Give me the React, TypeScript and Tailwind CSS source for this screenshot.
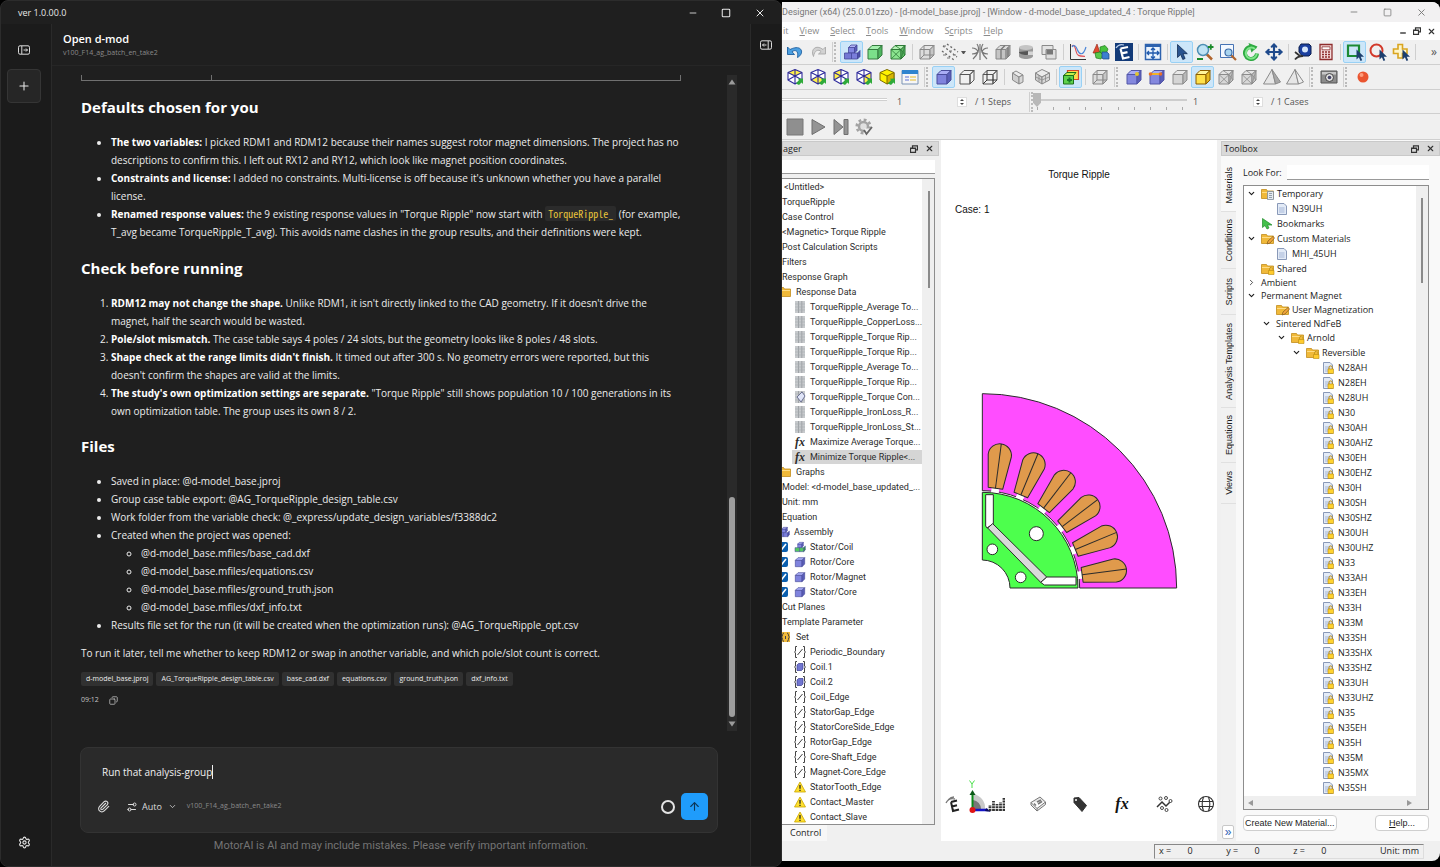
import React from "react";
import {
  ArrowUp,
  ChevronDown,
  Copy,
  Minus,
  Move,
  Paperclip,
  Plus,
  Settings,
  Settings2,
  Square,
  X,
} from "lucide-react";

type Kids = { children?: React.ReactNode };

/* ---------- shared icon drawings ---------- */

function Svg({ children, size = "size-[18px]" }: Kids & { size?: string }) {
  return (
    <svg viewBox="0 0 18 18" className={`${size} shrink-0`} fill="none" aria-hidden="true">
      {children}
    </svg>
  );
}

function CubeShape({ front, top, side, stroke }: { front: string; top: string; side: string; stroke: string }) {
  return (
    <g stroke={stroke} strokeWidth="1" strokeLinejoin="round">
      <path d="M2 6.5h10V16H2z" fill={front} />
      <path d="M2 6.5 6 2.5h10l-4 4z" fill={top} />
      <path d="M12 6.5l4-4V12l-4 4z" fill={side} />
    </g>
  );
}

const BlueCube = ({ size }: { size?: string }) => (
  <Svg size={size}>
    <CubeShape front="#7f83dd" top="#a9adf5" side="#5a5eb8" stroke="#4a4d9c" />
  </Svg>
);
const GreenCube = () => (
  <Svg>
    <CubeShape front="#7be08a" top="#a5f0ae" side="#4fb55f" stroke="#347a3f" />
  </Svg>
);
const YellowCube = () => (
  <Svg>
    <CubeShape front="#ffe14a" top="#fff59a" side="#e5b81e" stroke="#8a5c00" />
  </Svg>
);
const GreyCube = () => (
  <Svg>
    <CubeShape front="#d5d5d5" top="#e8e8e8" side="#b9b9b9" stroke="#8c8c8c" />
  </Svg>
);
const MeshCube = ({ green }: { green?: boolean }) => (
  <Svg>
    <CubeShape
      front={green ? "#8be58f" : "#d8d8d8"}
      top={green ? "#b5f2b5" : "#e4e4e4"}
      side={green ? "#5cbb64" : "#c2c2c2"}
      stroke={green ? "#2f7a38" : "#8c8c8c"}
    />
    <path d="M2 6.5 12 16M12 6.5 2 16M6 2.5l6 4M12 6.5l4 5.5M16 2.5 12 16" stroke={green ? "#2f7a38" : "#8c8c8c"} strokeWidth=".8" />
  </Svg>
);
const WireCube = ({ full, grey }: { full?: boolean; grey?: boolean }) => (
  <Svg>
    <CubeShape front={grey ? "#dcdcdc" : "none"} top={grey ? "#e6e6e6" : "none"} side={grey ? "#c6c6c6" : "none"} stroke={grey ? "#888" : "#555"} />
    {(full || grey) && <path d="M6 2.5V12M6 12h10M6 12l-4 4" stroke={grey ? "#888" : "#333"} />}
  </Svg>
);
const GridCube = () => (
  <Svg>
    <CubeShape front="#c4c4c4" top="#dcdcdc" side="#a6a6a6" stroke="#888" />
    <path d="M7 6.5V16M7 6.5l4-4M14 4.5V14" stroke="#777" strokeWidth="1.3" />
  </Svg>
);
const SlimCube = ({ box }: { box?: boolean }) => (
  <Svg>
    <g stroke="#8a8a8a" strokeLinejoin="round">
      <path d="M2.500 5 9 9v7L2.500 12z" fill="#cfcfcf" />
      <path d={box ? "M2.500 5 9 1.500 16.500 5 9 9z" : "M2.500 5 6 3l7 4-4 2z"} fill="#ebebeb" />
      <path d={box ? "M9 9l7.500-4V12L9 16z" : "M9 9l4-2v7l-4 2z"} fill="#d8d8d8" />
      {box && <path d="M6 7.2v6.5M12.500 7.2v6.5M2.500 8.800 9 12l7.500-3.200" strokeWidth=".8" />}
    </g>
  </Svg>
);

const facePaths = {
  top: "M9 1.5 16 4.5 9 8 2 4.5z",
  bottom: "M2 12l7-3.5 7 3.5-7 4z",
  left: "M2 4.5 9 1.5V9l-7 3z",
  right: "M9 8l7-3.5V12l-7 4z",
};
const ViewCube = ({ face }: { face: keyof typeof facePaths | "all" }) => (
  <Svg>
    {face === "all" ? (
      <g stroke="#7a6a00" strokeLinejoin="round">
        <path d="M9 1.5 16 4.5V12l-7 4-7-4V4.5z" fill="#fff200" />
        <path d="M9 8l7-3.5V12l-7 4z" fill="#d7b400" />
        <path d="M2 4.5 9 8" />
      </g>
    ) : (
      <g strokeLinejoin="round">
        <path d="M9 1.5 16 4.5V12l-7 4-7-4V4.5z" fill="#fff" />
        <path d={facePaths[face]} fill="#fff04a" />
        <path d="M9 1.5 16 4.5V12l-7 4-7-4V4.5zM2 4.5 9 8l7-3.5M9 8v8M9 1.5V8M2 12l7-4 7 4" stroke="#2e2a9c" strokeWidth="1.1" />
      </g>
    )}
    <path d="M10 15.5 13 12l-1.200-1.300L17 10.500V16l-1.500-1.500-2.500 2.500z" fill="#2faa3a" />
  </Svg>
);

const Undo = ({ grey }: { grey?: boolean }) => (
  <Svg>
    <path
      d={
        grey
          ? "M16.500 4v7h-7l2.600-2.500C9.500 6 5.500 7 4.500 13.500 1 6.500 7 1 14 6.500z"
          : "M1.500 4v7.500h7L6 8.800C8.500 6.500 13 7 11.500 14.500 19 10.500 16 .5 4 6.500z"
      }
      fill={grey ? "#d2d2d2" : "#4b9fe0"}
      stroke={grey ? "#a8a8a8" : "#1c5f9f"}
      strokeWidth=".9"
      strokeLinejoin="round"
    />
  </Svg>
);

const Blocks = ({ size, green }: { size?: string; green?: boolean }) => (
  <Svg size={size}>
    <g stroke="#45489a" strokeWidth=".8" strokeLinejoin="round">
      <path d="M5.500 4.500h6V10h-6z" fill="#8286e0" />
      <path d="M5.500 4.500 8 2h6l-2.500 2.500z" fill="#b1b4f5" />
      <path d="M11.500 4.500 14 2v5.500L11.500 10z" fill="#5a5eb8" />
      <path d="M1.500 10h7v6h-7z" fill={green ? "#54c95f" : "#7478d4"} />
      <path d="M8.500 10h6v6h-6z" fill={green ? "#54c95f" : "#7a7edb"} />
      <path d="M14.500 10 17 7.500v6L14.500 16z" fill={green ? "#2f9a3c" : "#4d50a8"} />
    </g>
  </Svg>
);

const Dashes = () => (
  <Svg>
    <path d="M2 3l14 11M1 8l12 9M6 1l11 8" stroke="#666" strokeWidth="1.300" strokeDasharray="2 2.200" />
    <path d="M2 3h3M8 8h3M12 12h3M2 12h3M6 15h3" stroke="#777" />
  </Svg>
);
const Burst = () => (
  <Svg>
    <path d="M6 1c2 3 2 5 1 8s-3 5-5 7M12 1c-2 3-2 5-1 8s3 5 5 7M1 5c3 0 5 1 6 4-2 2-4 2-6 2M17 5c-3 0-5 1-6 4 2 2 4 2 6 2M9 1v16" stroke="#777" strokeWidth="1.200" />
  </Svg>
);
const Cylinder = () => (
  <Svg>
    <path d="M2 4.500V13c0 4 14 4 14 0V4.500z" fill="#999" />
    <ellipse cx="9" cy="4.500" rx="7" ry="2.500" fill="#c4c4c4" />
    <path d="M2 9c0 3 9 3.500 9 2.500V8" fill="#555" />
    <path d="M11 8.500h5V12h-5z" fill="#d5d5d5" />
  </Svg>
);
const Overlap = () => (
  <Svg>
    <path d="M2 2.500h11v9H2z" fill="#e3e3e3" stroke="#8a8a8a" />
    <path d="M6 6.500h10V16H6z" fill="#dedede" stroke="#8a8a8a" />
    <path d="M6.500 7h6.500v4.500H6.500z" fill="#777" />
  </Svg>
);
const GraphIcon = () => (
  <Svg>
    <path d="M1.500 1v15.500H17" stroke="#333" />
    <path d="M3 3c1.500-2 3 0 4 5s3 5 9 5.500" stroke="#e0555c" strokeWidth="1.200" />
    <path d="M3 4c2-3 4-1 5.500 3S14 14 17 4" stroke="#4b86d8" strokeWidth="1.200" />
  </Svg>
);
const Shapes = () => (
  <Svg>
    <path d="M5 1 1 10h7z" fill="#e04a2f" stroke="#8f1f12" strokeWidth=".6" />
    <path d="M8 4l5-1.500L16 6l-2 5H8z" fill="#46c23c" stroke="#1f7a1a" strokeWidth=".7" />
    <path d="M3 10l5-1 3 3-2 4-5-1z" fill="#57c84a" stroke="#1f7a1a" strokeWidth=".7" />
    <path d="M10 9h5l2 2v5h-6l-1-1z" fill="#3c7fd0" stroke="#1a4788" strokeWidth=".7" />
  </Svg>
);
const ExpressE = () => (
  <Svg>
    <path d="M0 0h18v18H0z" fill="#123a78" />
    <path d="M1 5c2-3 5-4 8-3" stroke="#b7cbe8" strokeWidth="1.200" />
    <path d="M5.500 5.500 13 4M5.500 5.500 8 15.500l6.500-1.500M6.800 10.300l5.700-1.200" stroke="#fff" strokeWidth="2.200" />
  </Svg>
);
const FitWindow = () => (
  <Svg>
    <path d="M1.500 1.500h15v15h-15z" fill="#eaf3fd" stroke="#2d62ae" strokeWidth="1.500" />
    <path d="M1.500 3h15" stroke="#2d62ae" strokeWidth="2" />
    <path d="M9 5v10.500M3 10h12M7 7l2-2 2 2M7 13.500l2 2 2-2M5 8l-2 2 2 2M13 8l2 2-2 2" stroke="#1f59ac" strokeWidth="1.300" />
  </Svg>
);
const CursorPath = ({ at }: { at: string }) => (
  <path transform={at} d="M0 0v10l2.400-2.200L4 11.500l1.700-.8L4.200 7.200h3.300z" fill="#1d3f6e" />
);
const Pointer = () => (
  <Svg>
    <path d="M4.500 1.500v13l3.200-2.900 2.100 4.900 2.300-1-2.100-4.800h4.300z" fill="#2a5590" stroke="#122c52" strokeWidth=".8" />
  </Svg>
);
const ZoomPlus = () => (
  <Svg>
    <path d="M10 10.500l6 6" stroke="#b0642c" strokeWidth="2.500" />
    <circle cx="7" cy="7" r="5.500" fill="#bfe3f5" stroke="#4f8fb4" strokeWidth="1.500" />
    <path d="M12 4h5.500M14.800 1.300v5.500M1 16h6" stroke="#1a8a2a" strokeWidth="1.800" />
  </Svg>
);
const ZoomRect = () => (
  <Svg>
    <path d="M1.500 1.500h13v13h-13z" fill="#f3f8ff" stroke="#4673b4" />
    <path d="M12 12l5 5" stroke="#b0642c" strokeWidth="2.200" />
    <circle cx="9.500" cy="9.500" r="3.500" fill="#a9d4ef" stroke="#3b6ca8" strokeWidth="1.200" />
  </Svg>
);
const Refresh = () => (
  <Svg>
    <path d="M13.500 6A6 6 0 1 0 15 10.500" stroke="#2faa42" strokeWidth="4" />
    <path d="M6.500 0l9 3.500-6 6z" fill="#2faa42" />
    <path d="M13 6A5.500 5.500 0 1 0 14.800 10.500" stroke="#7fe58a" strokeWidth="2" />
  </Svg>
);
const Tape = () => (
  <Svg>
    <path d="M7 1h8l2 2v8l-2 2H8L5 9V4z" fill="#1b3f9f" stroke="#0c1f4c" />
    <circle cx="11" cy="6.500" r="3" fill="#d5e5fa" />
    <path d="M9 13c-4 0-6 1-8 3.500M1 9l5 4" stroke="#333" strokeWidth="1.800" />
  </Svg>
);
const Calc = () => (
  <Svg>
    <path d="M3 1.500h12v15H3z" fill="#f4dcdc" stroke="#8e2d2d" strokeWidth="1.300" />
    <path d="M5 3.800h8v3H5z" fill="#fff" stroke="#8e2d2d" strokeWidth=".8" />
    <path d="M5 9h2M8 9h2M11 9h2M5 11.500h2M8 11.500h2M11 11.500h2M5 14h2M8 14h2M11 14h2" stroke="#8e2d2d" strokeWidth="1.500" />
  </Svg>
);
const PickRect = () => (
  <Svg>
    <path d="M2 2.500h11V13H2z" stroke="#1c8a35" strokeWidth="2.200" />
    <CursorPath at="translate(10.500 6.500)" />
  </Svg>
);
const PickCircle = () => (
  <Svg>
    <circle cx="7.500" cy="7.500" r="6" stroke="#d23a2b" strokeWidth="2" />
    <CursorPath at="translate(10.500 6.500)" />
  </Svg>
);
const PickCross = () => (
  <Svg>
    <path d="M6 1.500h4.500V6H15v4.500h-4.500V15H6v-4.500H1.500V6H6z" fill="#fff6c9" stroke="#d9a520" strokeWidth="1.600" />
    <CursorPath at="translate(10.500 6.500)" />
  </Svg>
);
const TableWindow = () => (
  <Svg>
    <path d="M1 2.500h16v13.500H1z" fill="#f6f6f6" stroke="#7a93b4" />
    <path d="M1 2h16v4H1z" fill="#2f84cf" />
    <path d="M4 9h4M4 12h4" stroke="#aab3e6" strokeWidth="2" />
    <path d="M9 9h6M9 12h6" stroke="#eed98f" strokeWidth="2" />
  </Svg>
);
const GreenYellow = () => (
  <Svg>
    <path d="M5.500 2.500h11v9h-11z" fill="#ffd84a" stroke="#d2442a" strokeWidth="1.200" />
    <path d="M1.500 7.500h10V16h-10z" fill="#5ed14c" stroke="#1c6f1a" />
    <path d="M1.500 7.500 5 4.500h9l-2.500 3z" fill="#c5ef4a" stroke="#1c6f1a" />
    <path d="M5 12h5M7.500 9.500v5" stroke="#167a25" strokeWidth="2" />
  </Svg>
);
const CubeWithMark = ({ edge }: { edge?: boolean }) => (
  <Svg>
    <CubeShape front="#8488de" top="#a9adf5" side="#5a5eb8" stroke="#5357a8" />
    {edge ? (
      <g>
        <path d="M2 6h11" stroke="#f0b429" strokeWidth="2" />
        <circle cx="2.500" cy="6" r="1.800" fill="#e8702a" />
        <circle cx="12.500" cy="6" r="1.800" fill="#e8702a" />
      </g>
    ) : (
      <circle cx="12" cy="6" r="2" fill="#e2c52e" />
    )}
  </Svg>
);
const Tetra = ({ shade }: { shade?: boolean }) => (
  <Svg>
    <path d="M9 1.500 .5 16h12z" fill="#e6e6e6" stroke="#8a8a8a" />
    <path d="M9 1.500 17.500 14 12.500 16z" fill={shade ? "#a8a8a8" : "#efefef"} stroke="#8a8a8a" />
  </Svg>
);
const Camera = () => (
  <Svg>
    <path d="M1 3h16v12H1z" fill="#8c8c8c" stroke="#555" />
    <path d="M2 4h14v2.500H2z" fill="#c8c8c8" />
    <circle cx="9.500" cy="9.500" r="4" fill="#ddd" stroke="#444" />
    <circle cx="9.500" cy="9.500" r="1.800" fill="#446" />
  </Svg>
);
const RedBall = () => (
  <Svg>
    <circle cx="9" cy="9" r="5.500" fill="#ea5530" />
    <circle cx="7.500" cy="7" r="2" fill="#ff9d7c" />
  </Svg>
);
const GearCheck = () => (
  <Svg>
    <circle cx="8.500" cy="8.500" r="6.800" stroke="#a3a3a3" strokeWidth="2.500" strokeDasharray="2.800 2.540" />
    <circle cx="8.500" cy="8.500" r="4.500" fill="#e0e0e0" stroke="#a3a3a3" strokeWidth="2.500" />
    <path d="M9 10.500h7V17H9z" fill="#f0f0f0" />
    <path d="M9 12l2.500 4L17 9" stroke="#666" strokeWidth="1.800" />
  </Svg>
);

/* ---------- tree icons ---------- */

const FolderIcon = ({ mark }: { mark?: "page" | "pen" | "lock" }) => (
  <svg viewBox="0 0 14 12" className="h-3 w-3.5 shrink-0" aria-hidden="true">
    <path d="M.5 1.500h5l1 1.500h6v7.500H.5z" fill="#f0b93a" stroke="#c28d1c" strokeWidth=".8" />
    <path d="M1 4h11v1H1z" fill="#ffdd85" />
    {mark === "page" && <path d="M6.500 3.500h6v8h-6zM8 5.500h3M8 7.500h3M8 9.500h3" fill="#e6ebf0" stroke="#7f8c99" strokeWidth=".8" />}
    {mark === "pen" && <path d="M6 11l1-3 5-4.500 1.500 1.500L9 10z" fill="#f4a53c" stroke="#7d5a20" strokeWidth=".7" />}
    {mark === "lock" && (
      <g>
        <path d="M8.500 7.500V6a1.500 1.500 0 0 1 3.500 0v1.500" fill="none" stroke="#c79a1c" />
        <path d="M7.500 7.500h5.500v4H7.500z" fill="#ffcb2e" stroke="#b98a10" strokeWidth=".6" />
      </g>
    )}
  </svg>
);
const DocIcon = ({ lock }: { lock?: boolean }) => (
  <svg viewBox="0 0 12 12" className="size-3 shrink-0" aria-hidden="true">
    <path d="M1.500.5h6.500L10.500 3v8.500h-9z" fill="#e3ebf7" stroke="#7d8fb0" strokeWidth=".9" />
    <path d="M3 5h5.500M3 7h5.500M3 9h5.500" stroke="#9fb1d2" strokeWidth=".9" />
    {lock && (
      <g>
        <path d="M7 7V5.500a1.500 1.500 0 0 1 3.200 0V7" fill="none" stroke="#b98a10" />
        <path d="M6 7h5.500v4.500H6z" fill="#ffd22e" stroke="#b98a10" strokeWidth=".6" />
      </g>
    )}
  </svg>
);
const Bookmark = () => (
  <svg viewBox="0 0 12 12" className="size-3 shrink-0" aria-hidden="true">
    <path d="M1.500.5v9l2.500-2 2 3.500 2-1-1.500-3H11z" fill="#43c04a" stroke="#1f8a2a" strokeWidth=".7" />
  </svg>
);
const DataIcon = ({ contour }: { contour?: boolean }) => (
  <svg viewBox="0 0 12 12" className="size-3 shrink-0" aria-hidden="true">
    <path d="M1 0h10v12H1z" fill="#c6c9cc" />
    <path d="M4.500 0v12M7.800 0v12" stroke="#8f9498" strokeWidth=".7" />
    <path d="M1 3h10M1 6h10M1 9h10" stroke="#a6abaf" strokeWidth=".6" />
    {contour && <path d="M3 6l5-5 3 4-4 6z" fill="#dfe4f7" stroke="#555a80" strokeWidth=".8" />}
  </svg>
);
const Fx = () => <span className="w-3 shrink-0 text-center font-['Liberation_Serif',serif] text-[12px] leading-3 font-bold italic">fx</span>;
const SetIcon = ({ cube }: { cube?: boolean }) => (
  <svg viewBox="0 0 12 12" className="size-3 shrink-0" fill="none" aria-hidden="true">
    <path d="M3 .5H1.500V5L.5 6l1 1v4.500H3M9 .5h1.500V5l1 1-1 1v4.500H9" stroke="#444" />
    {cube ? <path d="M3 4l1.500-1.500H9V8L7.500 9.500H3z" fill="#7176d0" stroke="#3c4094" strokeWidth=".7" /> : <path d="M3.500 9 8.500 3" stroke="#444" />}
  </svg>
);
const Warn = () => (
  <svg viewBox="0 0 12 12" className="size-3 shrink-0" aria-hidden="true">
    <path d="M6 1 11.500 11H.5z" fill="#ffe02e" stroke="#c9a400" strokeWidth=".8" strokeLinejoin="round" />
    <path d="M6 4v3.800M6 8.800V10" stroke="#222" strokeWidth="1.300" />
  </svg>
);

/* ---------- chat window ---------- */

const PanelIcon = ({ flip }: { flip?: boolean }) => (
  <svg viewBox="0 0 12 10" className={flip ? "h-2.5 w-3 -scale-x-100" : "h-2.5 w-3"} fill="none" stroke="#dcdcdc" aria-hidden="true">
    <rect x=".5" y=".8" width="11" height="8.400" rx="1.500" />
    <path d="M3.800 1v8M5.500 5h4M8 3.500 9.500 5 8 6.500" />
  </svg>
);

const H = ({ children }: Kids) => <h2 className="text-[15px] leading-5 font-bold text-white">{children}</h2>;
const B = ({ children }: Kids) => <strong className="font-bold text-white">{children}</strong>;

const chips = ["d-model_base.jproj", "AG_TorqueRipple_design_table.csv", "base_cad.dxf", "equations.csv", "ground_truth.json", "dxf_info.txt"];

function ChatWindow() {
  return (
    <section className="flex min-w-0 flex-col overflow-hidden rounded-lg border border-[#2c2c2c] bg-[#1f1f1f] font-['Open_Sans','Noto_Sans',sans-serif] text-[#e8e8e8]">
      <header className="flex h-[23px] shrink-0 items-center justify-between pr-[15px] pl-[17px]">
        <span className="text-[9px]">ver 1.0.00.0</span>
        <div className="flex items-center gap-[23px]">
          <button aria-label="Minimize"><Minus size={10} /></button>
          <button aria-label="Maximize"><Square size={10} strokeWidth={2.500} /></button>
          <button aria-label="Close"><X size={12} /></button>
        </div>
      </header>
      <div className="flex min-h-0 flex-1">
        <nav className="flex w-[51px] shrink-0 flex-col items-center border-r border-[#2a2a2a] bg-[#1b1b1b] pr-1 pb-[17px]">
          <button aria-label="Open sidebar" className="mt-5 flex h-3 items-center"><PanelIcon /></button>
          <button aria-label="New chat" className="mt-[13px] flex size-[34px] items-center justify-center rounded border border-[#353535] bg-[#262626]">
            <Plus size={14} strokeWidth={1.800} />
          </button>
          <button aria-label="Settings" className="mt-auto"><Settings size={13} /></button>
        </nav>
        <main className="flex min-w-0 flex-1 flex-col">
          <div className="flex h-[42px] shrink-0 flex-col justify-center border-b border-[#262626] pl-[11px]">
            <h1 className="text-[11px] leading-4 font-semibold text-white">Open d-mod</h1>
            <p className="text-[7px] leading-3 text-[#8a8a8a]">v100_F14_ag_batch_en_take2</p>
          </div>
          <div className="flex min-h-0 flex-1 pt-[9px] pr-[13px] pl-[29px]">
            <article className="min-w-0 flex-1 pr-[46px] text-[10px] leading-[18px] text-[#ececec]">
              <div className="flex h-1.5 border-x border-b border-[#707070]">
                <div className="w-[130px] border-r border-[#707070]" />
              </div>
              <div className="mt-4"><H>Defaults chosen for you</H></div>
              <ul className="mt-4 -mr-2 list-disc pl-[30px]">
                <li><B>The two variables:</B> I picked RDM1 and RDM12 because their names suggest rotor magnet dimensions. The project has no descriptions to confirm this. I left out RX12 and RY12, which look like magnet position coordinates.</li>
                <li><B>Constraints and license:</B> I added no constraints. Multi-license is off because it's unknown whether you have a parallel license.</li>
                <li><B>Renamed response values:</B> the 9 existing response values in "Torque Ripple" now start with <code className="rounded-xs bg-[#2b2b2b] px-[3px] font-['Noto_Sans_Mono_CJK_JP','Liberation_Mono',monospace] text-[10px] leading-3 text-[#e8c43a]">TorqueRipple_</code> (for example, T_avg became TorqueRipple_T_avg). This avoids name clashes in the group results, and their definitions were kept.</li>
              </ul>
              <div className="mt-[17px]"><H>Check before running</H></div>
              <ol className="mt-4 list-decimal pl-[30px]">
                <li><B>RDM12 may not change the shape.</B> Unlike RDM1, it isn't directly linked to the CAD geometry. If it doesn't drive the magnet, half the search would be wasted.</li>
                <li><B>Pole/slot mismatch.</B> The case table says 4 poles / 24 slots, but the geometry looks like 8 poles / 48 slots.</li>
                <li><B>Shape check at the range limits didn't finish.</B> It timed out after 300 s. No geometry errors were reported, but this doesn't confirm the shapes are valid at the limits.</li>
                <li><B>The study's own optimization settings are separate.</B> "Torque Ripple" still shows population 10 / 100 generations in its own optimization table. The group uses its own 8 / 2.</li>
              </ol>
              <div className="mt-4"><H>Files</H></div>
              <ul className="mt-4 list-disc pl-[30px]">
                <li>Saved in place: @d-model_base.jproj</li>
                <li>Group case table export: @AG_TorqueRipple_design_table.csv</li>
                <li>Work folder from the variable check: @_express/update_design_variables/f3388dc2</li>
                <li>Created when the project was opened:
                  <ul className="list-[circle] pl-[30px]">
                    <li>@d-model_base.mfiles/base_cad.dxf</li>
                    <li>@d-model_base.mfiles/equations.csv</li>
                    <li>@d-model_base.mfiles/ground_truth.json</li>
                    <li>@d-model_base.mfiles/dxf_info.txt</li>
                  </ul>
                </li>
                <li>Results file set for the run (it will be created when the optimization runs): @AG_TorqueRipple_opt.csv</li>
              </ul>
              <p className="mt-2.5">To run it later, tell me whether to keep RDM12 or swap in another variable, and which pole/slot count is correct.</p>
              <div className="mt-2.5 flex gap-[3px]">
                {chips.map((c) => (
                  <a key={c} href="#" className="rounded-xs bg-[#313131] px-[5px] text-[7px] leading-[14px] whitespace-nowrap">{c}</a>
                ))}
              </div>
              <div className="mt-2 flex items-center gap-2.5 text-[7px] leading-3 text-[#c5c5c5]">
                <time>09:12</time>
                <button aria-label="Copy"><Copy size={9} className="-scale-x-100" /></button>
              </div>
            </article>
            <div className="flex w-2.5 flex-col items-center bg-[#2a2a2a] py-1" aria-hidden="true">
              <svg viewBox="0 0 8 6" className="h-1.5 w-2 shrink-0"><path d="M4 .5 7.500 5.500h-7z" fill="#9b9b9b" /></svg>
              <div className="mt-auto mb-1 h-[34%] w-1.5 rounded-full bg-[#9d9d9d]" />
              <svg viewBox="0 0 8 6" className="h-1.5 w-2 shrink-0"><path d="M4 5.500 7.500.5h-7z" fill="#9b9b9b" /></svg>
            </div>
          </div>
          <form className="mt-4 mr-8 ml-7 flex h-[86px] shrink-0 flex-col rounded-lg border border-[#333] bg-[#2a2a2a] pr-[9px] pl-4">
            <div className="mt-[15px] flex h-[18px] items-center pl-[5px]">
              <input aria-label="Message" defaultValue="Run that analysis-group" className="[field-sizing:content] bg-transparent text-[10px] text-[#f0f0f0] caret-transparent outline-none" />
              <span className="h-3.5 w-px bg-[#f0f0f0]" />
            </div>
            <div className="mt-3 flex items-center text-[#dcdcdc]">
              <button type="button" aria-label="Attach"><Paperclip size={13} /></button>
              <button type="button" className="ml-4 flex items-center gap-1 text-[9px]">
                <Settings2 size={12} className="-scale-x-100" />Auto<ChevronDown size={9} className="ml-0.5" />
              </button>
              <span className="ml-2.5 text-[7px] text-[#8a8a8a]">v100_F14_ag_batch_en_take2</span>
              <span className="mr-1.5 ml-auto size-3.5 rounded-full border-2 border-[#e4e4e4]" />
              <button type="button" aria-label="Send" className="flex size-[27px] items-center justify-center rounded-[5px] bg-[#1f9cfb] text-[#0c3558]"><ArrowUp size={13} /></button>
            </div>
          </form>
          <p className="mt-[5px] mb-3 text-center font-['Roboto',sans-serif] text-[11px] leading-4 text-[#747474]">MotorAI is AI and may include mistakes. Please verify important information.</p>
        </main>
        <aside className="w-[31px] shrink-0 border-l border-[#2a2a2a] bg-[#1b1b1b] pt-4 pl-[9px]">
          <button aria-label="Open panel" className="block"><PanelIcon flip /></button>
        </aside>
      </div>
    </section>
  );
}

/* ---------- designer window ---------- */

type Tool = { name: string; icon: React.ReactNode; on?: boolean } | "sep" | "grip" | "caret";

function ToolRow({ tools }: { tools: Tool[] }) {
  return (
    <div className="flex h-[25px] shrink-0 items-center overflow-hidden border-b border-[#cfcfcf] pl-px">
      {tools.map((t, i) => {
        if (t === "sep") return <span key={i} className="mx-[2px] h-4 w-0.5 shrink-0 border-r border-[#cfcfcf]" />;
        if (t === "grip") return <span key={i} className="mr-1 ml-[3px] h-5 w-1 shrink-0 border-r-2 border-l border-r-[#bbb] border-l-[#cfcfcf] [border-right-style:dotted]" />;
        if (t === "caret") return <span key={i} className="mr-0.5 w-[5px] shrink-0 border-x-2 border-t-3 border-x-transparent border-t-[#555]" />;
        return (
          <button key={i} aria-label={t.name} className={t.on ? "flex h-[22px] w-[23px] shrink-0 items-center justify-center rounded-xs border border-[#99d1f5] bg-[#cce6f9]" : "flex h-[22px] w-[23px] shrink-0 items-center justify-center"}>
            {t.icon}
          </button>
        );
      })}
    </div>
  );
}

const row1: Tool[] = [
  { name: "Undo", icon: <Undo /> },
  { name: "Redo", icon: <Undo grey /> },
  "grip",
  { name: "Assembly", icon: <Blocks />, on: true },
  { name: "Solid", icon: <GreenCube /> },
  { name: "Mesh", icon: <MeshCube green /> },
  "sep",
  { name: "Transparent", icon: <WireCube grey /> },
  { name: "Vectors", icon: <Dashes /> },
  "caret",
  { name: "Flux lines", icon: <Burst /> },
  { name: "Sections", icon: <GridCube /> },
  { name: "Cylinder", icon: <Cylinder /> },
  { name: "Overlay", icon: <Overlap /> },
  "sep",
  { name: "Graph", icon: <GraphIcon /> },
  { name: "Geometry", icon: <Shapes /> },
  { name: "Express", icon: <ExpressE /> },
  "sep",
  { name: "Fit window", icon: <FitWindow /> },
  "sep",
  { name: "Pointer", icon: <Pointer />, on: true },
  { name: "Zoom", icon: <ZoomPlus /> },
  { name: "Zoom area", icon: <ZoomRect /> },
  { name: "Rotate", icon: <Refresh /> },
  { name: "Pan", icon: <Move size={18} color="#1f4a8c" strokeWidth={2.800} /> },
  "sep",
  { name: "Measure", icon: <Tape /> },
  { name: "Calculator", icon: <Calc /> },
  "sep",
  { name: "Pick rectangle", icon: <PickRect />, on: true },
  { name: "Pick circle", icon: <PickCircle /> },
  { name: "Pick polygon", icon: <PickCross /> },
  "sep",
];

const row2: Tool[] = [
  { name: "Top view", icon: <ViewCube face="top" /> },
  { name: "Bottom view", icon: <ViewCube face="bottom" /> },
  { name: "Left view", icon: <ViewCube face="left" /> },
  { name: "Right view", icon: <ViewCube face="right" /> },
  { name: "Isometric view", icon: <ViewCube face="all" /> },
  { name: "View list", icon: <TableWindow /> },
  "grip",
  { name: "Shaded", icon: <BlueCube />, on: true },
  { name: "Hidden line", icon: <WireCube /> },
  { name: "Wireframe", icon: <WireCube full /> },
  "sep",
  { name: "Slice", icon: <SlimCube /> },
  { name: "Split", icon: <SlimCube box /> },
  "sep",
  { name: "Parts", icon: <GreenYellow />, on: true },
  "sep",
  { name: "Ghost", icon: <WireCube grey /> },
  "grip",
  { name: "Vertex", icon: <CubeWithMark /> },
  { name: "Edge", icon: <CubeWithMark edge /> },
  { name: "Face", icon: <GreyCube /> },
  { name: "Part", icon: <YellowCube />, on: true },
  { name: "Element", icon: <MeshCube /> },
  { name: "Node", icon: <MeshCube /> },
  { name: "Tetra", icon: <Tetra shade /> },
  { name: "Tetra face", icon: <Tetra /> },
  "grip",
  { name: "Capture", icon: <Camera /> },
  "grip",
  { name: "Record", icon: <RedBall /> },
];

const Restore = () => (
  <svg viewBox="0 0 8 8" className="size-2" fill="none" stroke="#333" aria-hidden="true">
    <path d="M2.500 2.500V.8h5v4H6M.5 3h5v4.300h-5zM.5 3.500h5" strokeWidth="1.200" />
  </svg>
);

const DockTitle = ({ children, pad }: Kids & { pad: string }) => (
  <div className={`flex h-[15px] shrink-0 items-center justify-between border border-[#c9c9c9] bg-[#d9d9d9] pr-1 ${pad}`}>
    <h2>{children}</h2>
    <div className="flex items-center gap-[7px]">
      <button aria-label="Float"><Restore /></button>
      <button aria-label="Close"><X size={9} strokeWidth={3} color="#333" /></button>
    </div>
  </div>
);

const Spin = () => (
  <span className="flex h-2.5 w-2.5 flex-col items-center justify-center gap-0.5 border border-[#dedede] bg-white" aria-hidden="true">
    <span className="border-x-2 border-b-2 border-x-transparent border-b-[#444]" />
    <span className="border-x-2 border-t-2 border-x-transparent border-t-[#444]" />
  </span>
);

type Node = { t: string; i: 0 | 1 | 2; icon?: React.ReactNode; sel?: boolean; box?: boolean };
const cube = <BlueCube size="size-3" />;
const leftTree: Node[] = [
  { t: "<Untitled>", i: 0 },
  { t: "TorqueRipple", i: 0 },
  { t: "Case Control", i: 0 },
  { t: "<Magnetic> Torque Ripple", i: 0 },
  { t: "Post Calculation Scripts", i: 0 },
  { t: "Filters", i: 0 },
  { t: "Response Graph", i: 0 },
  { t: "Response Data", i: 1, icon: <FolderIcon /> },
  { t: "TorqueRipple_Average To...", i: 2, icon: <DataIcon /> },
  { t: "TorqueRipple_CopperLoss...", i: 2, icon: <DataIcon /> },
  { t: "TorqueRipple_Torque Rip...", i: 2, icon: <DataIcon /> },
  { t: "TorqueRipple_Torque Rip...", i: 2, icon: <DataIcon /> },
  { t: "TorqueRipple_Average To...", i: 2, icon: <DataIcon /> },
  { t: "TorqueRipple_Torque Rip...", i: 2, icon: <DataIcon /> },
  { t: "TorqueRipple_Torque Con...", i: 2, icon: <DataIcon contour /> },
  { t: "TorqueRipple_IronLoss_R...", i: 2, icon: <DataIcon /> },
  { t: "TorqueRipple_IronLoss_St...", i: 2, icon: <DataIcon /> },
  { t: "Maximize Average Torque...", i: 2, icon: <Fx /> },
  { t: "Minimize Torque Ripple<...", i: 2, icon: <Fx />, sel: true },
  { t: "Graphs", i: 1, icon: <FolderIcon /> },
  { t: "Model: <d-model_base_updated_...", i: 0 },
  { t: "Unit: mm", i: 0 },
  { t: "Equation", i: 0 },
  { t: "Assembly", i: 1, icon: <Blocks size="size-3" /> },
  { t: "Stator/Coil", i: 2, icon: <Blocks size="size-3" green />, box: true },
  { t: "Rotor/Core", i: 2, icon: cube, box: true },
  { t: "Rotor/Magnet", i: 2, icon: cube, box: true },
  { t: "Stator/Core", i: 2, icon: cube, box: true },
  { t: "Cut Planes", i: 0 },
  { t: "Template Parameter", i: 0 },
  { t: "Set", i: 1, icon: <SetFolder /> },
  { t: "Periodic_Boundary", i: 2, icon: <SetIcon /> },
  { t: "Coil.1", i: 2, icon: <SetIcon cube /> },
  { t: "Coil.2", i: 2, icon: <SetIcon cube /> },
  { t: "Coil_Edge", i: 2, icon: <SetIcon /> },
  { t: "StatorGap_Edge", i: 2, icon: <SetIcon /> },
  { t: "StatorCoreSide_Edge", i: 2, icon: <SetIcon /> },
  { t: "RotorGap_Edge", i: 2, icon: <SetIcon /> },
  { t: "Core-Shaft_Edge", i: 2, icon: <SetIcon /> },
  { t: "Magnet-Core_Edge", i: 2, icon: <SetIcon /> },
  { t: "StatorTooth_Edge", i: 2, icon: <Warn /> },
  { t: "Contact_Master", i: 2, icon: <Warn /> },
  { t: "Contact_Slave", i: 2, icon: <Warn /> },
];

function SetFolder() {
  return (
    <svg viewBox="0 0 14 12" className="h-3 w-3.5 shrink-0" fill="none" aria-hidden="true">
      <path d="M1 1h11v10H1z" fill="#f0b93a" />
      <path d="M6 2C4 2 5 5.500 3.500 6 5 6.500 4 10.500 6 10.500M9 2c2 0 1 3.500 2.500 4C10 6.500 11 10.500 9 10.500M7.500 5v3" stroke="#444" />
    </svg>
  );
}

function LeftDock() {
  return (
    <section className="flex w-[157px] shrink-0 flex-col pt-px">
      <DockTitle pad="pl-0">ager</DockTitle>
      <input aria-label="Search project" className="mt-1 mr-1 h-3.5 border-b border-[#999] bg-white outline-none" />
      <div className="mt-1 mr-1 flex min-h-0 flex-1 overflow-hidden border-t border-r border-b border-[#8d8d8d] bg-white">
        <ul className="grid min-w-0 flex-1 auto-rows-fr overflow-hidden font-['Roboto',sans-serif] text-[#2c2c2c]">
          {leftTree.map((n, k) => (
            <li key={k} className="flex min-h-0 items-center">
              {n.i === 0 && <span className={k === 0 ? "pl-0.5 whitespace-nowrap" : "whitespace-nowrap"}>{n.t}</span>}
              {n.i === 1 && <span className="-ml-1 flex items-center gap-1 whitespace-nowrap">{n.icon}{n.t}</span>}
              {n.i === 2 && (
                <label className="flex min-w-0 flex-1 items-center">
                  <span className="-ml-1 flex w-3.5 shrink-0">
                    {n.box && <input type="checkbox" defaultChecked className="size-2.5 accent-[#0a5fb0]" />}
                  </span>
                  <span className={n.sel ? "flex h-3.5 flex-1 items-center gap-1 bg-[#d5d5d5] pl-0.5 whitespace-nowrap" : "flex h-3.5 flex-1 items-center gap-1 pl-0.5 whitespace-nowrap"}>{n.icon}{n.t}</span>
                </label>
              )}
            </li>
          ))}
        </ul>
        <div className="w-3 shrink-0 bg-[#efefef] pt-3 pl-1.5" aria-hidden="true">
          <div className="h-[97px] w-0.5 bg-[#8a8a8a]" />
        </div>
      </div>
      <div className="h-4 w-[45px] bg-[#f7f7f7] pl-2 leading-4">Control</div>
    </section>
  );
}

const slotAngles = [7.5, 22.5, 37.5, 52.5, 67.5, 82.5];

function MotorModel() {
  return (
    <svg viewBox="150 35 600 594" className="h-[198px] w-[200px]" stroke="#2b2b2b" strokeWidth="3" strokeLinejoin="round" role="img" aria-label="Motor quarter model">
      <path d="M157 40A583 583 0 0 1 740 623H449A292 292 0 0 0 157 331z" fill="#ff4dff" />
      {slotAngles.map((a) => (
        <g key={a} transform={`translate(157 623) rotate(${a})`}>
          <path d="M-10 -287V-303H10V-287z" fill="#fff" stroke="#fff" />
          <path d="M-22 -302-35 -401A35 35 0 0 1 35 -401L22 -302z" fill="#e09a4c" />
          <path d="M0 -302V-436" />
        </g>
      ))}
      <path d="M157 336A287 287 0 0 1 444 623H240A84 84 0 0 0 157 539z" fill="#4dff4d" />
      <path d="M167 343H190V430L171 443 167 437z" fill="#fff" />
      <path d="M350 590H438V614H343L332 606z" fill="#fff" />
      <path d="M188 430 350 590 332 606 173 443z" fill="#dadada" />
      <circle cx="319" cy="460" r="21" fill="#fff" />
      <circle cx="187" cy="507" r="16" fill="#fff" />
      <circle cx="272" cy="591" r="16" fill="#fff" />
    </svg>
  );
}

function Viewport() {
  return (
    <section className="relative flex min-w-0 flex-1 flex-col bg-white font-['Liberation_Sans',sans-serif] text-[10px] text-[#111]">
      <h2 className="mt-[29px] text-center leading-3">Torque Ripple</h2>
      <p className="mt-[23px] pl-3.5 leading-3">Case: 1</p>
      <div className="mt-44 pl-[39px]"><MotorModel /></div>
      <div className="mt-auto mb-7 flex items-center justify-between pr-0.5 pl-1">
        <svg viewBox="0 0 18 18" className="size-[18px]" fill="none" aria-hidden="true">
          <path d="M1 8c2-4 5-5 9-4M3 5c2-2 4-3 6-3" stroke="#777" strokeWidth="1.300" />
          <path d="M6 7l6-1.500M6 7l2 9 6-1.500M7 11.500l5-1.200" stroke="#222" strokeWidth="2" />
        </svg>
        <svg viewBox="0 0 18 18" className="size-[18px]" aria-hidden="true">
          <path d="M3 16V10M6.500 16V6M10 16V9M13.500 16V7M17 16V3" stroke="#333" strokeWidth="2.800" strokeDasharray="2 .8" />
        </svg>
        <svg viewBox="0 0 18 18" className="size-[18px]" fill="#e8e8e8" stroke="#777" aria-hidden="true">
          <path d="M2 7.500 11 2l5.500 5L8 13.500zM2 7.500V10l6 6 8.500-6.500V7M8 13.500V16" />
          <path d="M5 8.500l2 2M8 7l4-2M9 9l4-2.500" strokeWidth="1.500" />
        </svg>
        <svg viewBox="0 0 18 18" className="size-[18px]" aria-hidden="true">
          <path d="M3 3l5-.5 7.500 8-4.500 6-8-9z" fill="#333" stroke="#333" strokeLinejoin="round" />
          <circle cx="5" cy="5" r="1" fill="#fff" />
        </svg>
        <span className="w-[18px] text-center font-['Liberation_Serif',serif] text-[16px] leading-4 font-bold italic">fx</span>
        <svg viewBox="0 0 18 18" className="size-[18px]" fill="#fff" stroke="#333" aria-hidden="true">
          <path d="M2 12 7 7l4 4 5-5" strokeWidth="1.500" fill="none" />
          <g strokeWidth=".9"><circle cx="5.500" cy="3.500" r="1.500" /><circle cx="11" cy="3" r="1.500" /><circle cx="15.500" cy="6" r="1.500" /><circle cx="7" cy="13" r="1.500" /><circle cx="11.500" cy="15" r="1.500" /></g>
        </svg>
        <svg viewBox="0 0 18 18" className="size-[18px]" fill="none" stroke="#333" strokeWidth="1.100" aria-hidden="true">
          <circle cx="9" cy="9" r="7.500" />
          <path d="M6.500 2c-1.500 4-1.500 10 0 14M11.500 2c1.500 4 1.500 10 0 14M2 6.500h14M2 11.500h14" />
        </svg>
      </div>
      <svg viewBox="0 0 26 36" className="absolute bottom-[26px] left-[25px] h-9 w-[26px]" fill="none" aria-hidden="true">
        <path d="M7 31V15a14 14 0 0 1 12 15z" fill="#c9c9c9" />
        <path d="M7 31V21a9 9 0 0 1 8 9z" fill="#777" />
        <path d="M6.500 1.500 9 5l2.500-3.500M9 5v4" transform="translate(-3)" stroke="#4be04b" />
        <path d="M6.500 31V14" stroke="#0c8a18" strokeWidth="2" />
        <path d="M6.500 11 9.500 16h-6z" fill="#0c5a18" />
        <path d="M7 31h15" stroke="#1414c8" strokeWidth="2.500" />
        <path d="M20 29l5 4-6-1z" fill="#0a0a60" />
        <circle cx="6.500" cy="31" r="3" fill="#e01414" />
      </svg>
    </section>
  );
}

const tabs = [
  { t: "Materials", c: "h-[52px] bg-[#f9f9f9]" },
  { t: "Conditions", c: "h-[57px]" },
  { t: "Scripts", c: "h-[46px]" },
  { t: "Analysis Templates", c: "h-[93px]" },
  { t: "Equations", c: "h-[55px]" },
  { t: "Views", c: "h-[41px]" },
];

type Mat = { t: string; d: number; open?: boolean; closed?: boolean; icon?: React.ReactNode };
const locked = [
  "N28AH", "N28EH", "N28UH", "N30", "N30AH", "N30AHZ", "N30EH", "N30EHZ", "N30H", "N30SH", "N30SHZ", "N30UH", "N30UHZ",
  "N33", "N33AH", "N33EH", "N33H", "N33M", "N33SH", "N33SHX", "N33SHZ", "N33UH", "N33UHZ", "N35", "N35EH", "N35H", "N35M", "N35MX", "N35SH",
];
const mats: Mat[] = [
  { t: "Temporary", d: 0, open: true, icon: <FolderIcon mark="page" /> },
  { t: "N39UH", d: 1, icon: <DocIcon /> },
  { t: "Bookmarks", d: 0, icon: <Bookmark /> },
  { t: "Custom Materials", d: 0, open: true, icon: <FolderIcon mark="pen" /> },
  { t: "MHI_45UH", d: 1, icon: <DocIcon /> },
  { t: "Shared", d: 0, icon: <FolderIcon mark="lock" /> },
  { t: "Ambient", d: 0, closed: true },
  { t: "Permanent Magnet", d: 0, open: true },
  { t: "User Magnetization", d: 1, icon: <FolderIcon mark="pen" /> },
  { t: "Sintered NdFeB", d: 1, open: true },
  { t: "Arnold", d: 2, open: true, icon: <FolderIcon mark="lock" /> },
  { t: "Reversible", d: 3, open: true, icon: <FolderIcon mark="lock" /> },
  ...locked.map((t) => ({ t, d: 4, icon: <DocIcon lock /> })),
];
const depth = ["pl-[3px]", "pl-[18px]", "pl-[33px]", "pl-12", "pl-16"];

function Toolbox() {
  return (
    <section className="flex w-[219px] shrink-0 flex-col bg-[#f9f9f9] pt-px">
      <DockTitle pad="pl-0.5">Toolbox</DockTitle>
      <div className="flex min-h-0 flex-1 pt-1">
        <div className="flex w-[15px] shrink-0 flex-col bg-[#f1f1f1] font-['Liberation_Sans',sans-serif]">
          {tabs.map((t) => (
            <button key={t.t} className={`flex w-full items-center justify-center border-b border-[#e0e0e0] text-[9px] ${t.c}`}>
              <span className="rotate-180 whitespace-nowrap [writing-mode:vertical-rl]">{t.t}</span>
            </button>
          ))}
          <button aria-label="More tabs" className="mt-auto mb-0.5 ml-px h-3.5 w-3 rounded-xs border border-[#c8c8c8] bg-white text-[12px] leading-[10px] text-[#2f62b4]">»</button>
        </div>
        <div className="flex min-w-0 flex-1 flex-col pr-[11px] pl-[7px]">
          <label className="mt-[5px] flex h-[15px] items-center gap-[5px]">
            <span className="whitespace-nowrap">Look For:</span>
            <input className="h-full min-w-0 flex-1 border-b border-[#999] bg-white outline-none" />
          </label>
          <div className="mt-[5px] flex min-h-0 flex-1 flex-col border border-[#8d8d8d] bg-white">
            <div className="flex min-h-0 flex-1">
              <ul className="min-w-0 flex-1 overflow-hidden">
                {mats.map((m) => (
                  <li key={m.t} className={`flex items-center whitespace-nowrap ${depth[m.d]} ${m.icon ? "h-[15px]" : "h-[13px]"}`}>
                    <span className="flex w-3.5 shrink-0">
                      {m.open && <ChevronDown size={9} strokeWidth={3} />}
                      {m.closed && <ChevronDown size={9} strokeWidth={2} className="-rotate-90" />}
                    </span>
                    {m.icon && <span className="flex w-4 shrink-0">{m.icon}</span>}
                    {m.t}
                  </li>
                ))}
              </ul>
              <div className="w-3 shrink-0 bg-[#efefef] pt-3 pl-[5px]" aria-hidden="true">
                <div className="h-[85px] w-0.5 bg-[#8a8a8a]" />
              </div>
            </div>
            <div className="flex h-[13px] shrink-0 items-center justify-between bg-[#efefef] pr-4 pl-1" aria-hidden="true">
              <span className="border-y-3 border-r-5 border-y-transparent border-r-[#999]" />
              <span className="border-y-3 border-l-5 border-y-transparent border-l-[#999]" />
            </div>
          </div>
          <div className="mt-[5px] mb-2.5 flex justify-between font-['Liberation_Sans',sans-serif]">
            <button className="h-4 rounded border border-[#cfcfcf] bg-white px-px text-[9px] whitespace-nowrap">Create New Material...</button>
            <button className="h-4 w-[54px] rounded border border-[#cfcfcf] bg-white text-[9px]"><u>H</u>elp...</button>
          </div>
        </div>
      </div>
    </section>
  );
}

function DesignerWindow() {
  return (
    <section className="mt-0.5 mb-[6px] flex min-w-0 flex-col overflow-hidden rounded-r-lg bg-[#f0f0f0] font-['Open_Sans','Noto_Sans',sans-serif] text-[9px] leading-3 text-[#1c1c1c]">
      <header className="flex h-5 shrink-0 items-center justify-between bg-[#f2f1f2] pr-[13px] font-['Roboto',sans-serif] text-[9px] text-[#777]">
        <span className="whitespace-nowrap">Designer (x64) (25.0.01zzo) - [d-model_base.jproj] - [Window - d-model_base_updated_4 : Torque Ripple]</span>
        <div className="flex items-center gap-6">
          <button aria-label="Minimize window"><Minus size={10} /></button>
          <button aria-label="Maximize window"><Square size={9} /></button>
          <button aria-label="Close window"><X size={11} /></button>
        </div>
      </header>
      <div className="flex h-[18px] shrink-0 items-center justify-between bg-white pr-1 text-[#8a8a8a]">
        <nav className="flex gap-[11px] pl-px">
          <a href="#">it</a>
          <a href="#"><u>V</u>iew</a>
          <a href="#"><u>S</u>elect</a>
          <a href="#"><u>T</u>ools</a>
          <a href="#"><u>W</u>indow</a>
          <a href="#">S<u>c</u>ripts</a>
          <a href="#"><u>H</u>elp</a>
        </nav>
        <div className="flex items-center gap-1.5">
          <button aria-label="Minimize document" className="mt-1"><Minus size={8} strokeWidth={4} color="#444" /></button>
          <button aria-label="Restore document"><Restore /></button>
          <button aria-label="Close document"><X size={9} strokeWidth={3} color="#333" /></button>
        </div>
      </div>
      <div className="flex border-b border-[#cfcfcf]">
        <div className="-mb-px min-w-0 flex-1"><ToolRow tools={row1} /></div>
        <button aria-label="More tools" className="w-3 text-[12px] text-[#555]">»</button>
      </div>
      <ToolRow tools={row2} />
      <div className="flex h-6 shrink-0 items-center border-b border-[#cfcfcf] text-[9px] text-[#555]">
        <div className="mb-1 h-[3px] w-[105px] border-y border-[#d0d0d0] bg-white" />
        <input aria-label="Step" defaultValue="1" className="ml-2.5 w-[60px] bg-transparent outline-none" />
        <Spin />
        <span className="w-[62px] pl-2">/ 1 Steps</span>
        <span className="h-5 w-1 border-r-2 border-l border-r-[#bbb] border-l-[#cfcfcf] [border-right-style:dotted]" />
        <div className="flex w-[154px] flex-col">
          <input
            type="range"
            aria-label="Case slider"
            defaultValue={0}
            className="h-3.5 w-full appearance-none bg-[linear-gradient(#cdcdcd,#cdcdcd)] bg-[length:100%_2px] bg-center bg-no-repeat [&::-webkit-slider-thumb]:h-3.5 [&::-webkit-slider-thumb]:w-2 [&::-webkit-slider-thumb]:appearance-none [&::-webkit-slider-thumb]:bg-[#b8b8b8] [&::-webkit-slider-thumb]:[clip-path:polygon(0_0,100%_0,100%_70%,50%_100%,0_70%)]"
          />
          <div className="flex h-[3px] justify-between pr-1 pl-1" aria-hidden="true">
            {Array.from({ length: 10 }, (_, i) => <span key={i} className="w-px bg-[#aaa]" />)}
          </div>
        </div>
        <input aria-label="Case" defaultValue="1" className="ml-1.5 w-[60px] bg-transparent outline-none" />
        <Spin />
        <span className="pl-2">/ 1 Cases</span>
      </div>
      <div className="flex h-[26px] shrink-0 items-center gap-[5px] border-b border-[#cfcfcf] pl-1">
        <button aria-label="Stop"><Svg><path d="M1 1h16v16H1z" fill="#8f8f8f" stroke="#777" /></Svg></button>
        <button aria-label="Play"><Svg><path d="M3 1.500 16 9 3 16.500z" fill="#949494" stroke="#6f6f6f" /></Svg></button>
        <button aria-label="Step forward"><Svg><path d="M2 1.500 11 9 2 16.500zM12 1.500h4v15h-4z" fill="#949494" stroke="#6f6f6f" /></Svg></button>
        <button aria-label="Run settings"><GearCheck /></button>
      </div>
      <div className="flex min-h-0 flex-1">
        <LeftDock />
        <div className="flex min-w-0 flex-1 pr-1 pl-0.5"><Viewport /></div>
        <Toolbox />
      </div>
      <footer className="flex h-5 shrink-0 items-center justify-end pr-4">
        <div className="flex h-[15px] w-[270px] items-center justify-between border border-[#888] border-r-[#ddd] border-b-[#ddd] pr-1 pl-1 text-[9px] whitespace-pre">
          <span>x =       0</span>
          <span>y =       0</span>
          <span>z =       0</span>
          <span className="pl-5">Unit: mm</span>
        </div>
      </footer>
    </section>
  );
}

export default function App() {
  return (
    <div className="grid h-screen grid-cols-[782fr_658fr] grid-rows-[minmax(0,1fr)] overflow-hidden bg-black">
      <ChatWindow />
      <DesignerWindow />
    </div>
  );
}
